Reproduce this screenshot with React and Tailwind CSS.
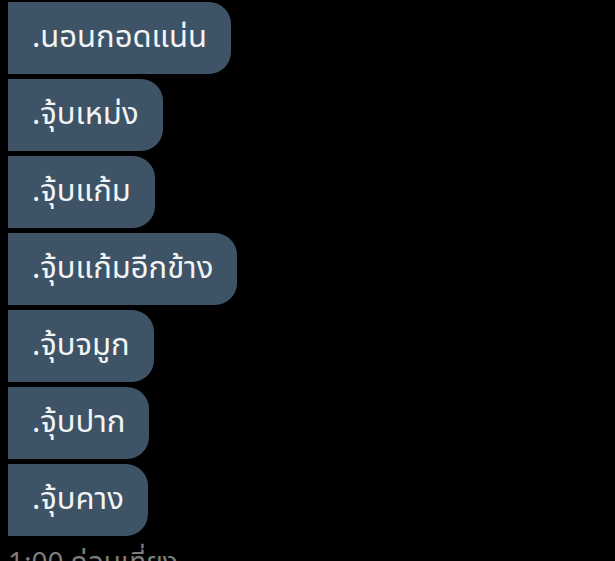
import React from "react";

const items = [
  ".นอนกอดแน่น",
  ".จุ้บเหม่ง",
  ".จุ้บแก้ม",
  ".จุ้บแก้มอีกข้าง",
  ".จุ้บจมูก",
  ".จุ้บปาก",
  ".จุ้บคาง",
];

export default function App() {
  return (
    <div
      className="w-[615px] h-[561px] overflow-hidden bg-black pt-[2px] pl-2"
      style={{ fontFamily: '"Noto Sans", "Noto Sans Thai", "DejaVu Sans", sans-serif' }}
    >
      <div className="flex flex-col items-start gap-[5px]">
        {items.map((t) => (
          <div
            key={t}
            className="h-[72px] flex items-center pl-6 pr-6 pb-[6px] bg-[#3e5466] text-[#f2f4f6] text-[31px] rounded-r-[22px] leading-none"
          >
            {t}
          </div>
        ))}
      </div>
      <div className="mt-[11px] text-[28px] text-[#7d7d7d] leading-none">
        1:00 ก่อนเที่ยง
      </div>
    </div>
  );
}
